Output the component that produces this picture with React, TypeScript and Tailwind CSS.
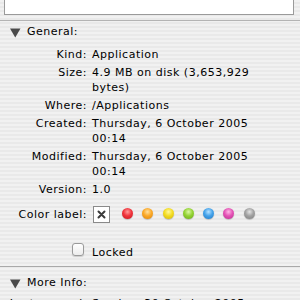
import React from "react";

const font = { fontFamily: '"DejaVu Sans", "Lucida Grande", sans-serif' };

function Tri() {
  return (
    <svg width="11" height="10" viewBox="0 0 11 10" className="mt-[4px] ml-[10px] mr-[6px] shrink-0">
      <polygon points="0,0.5 10.5,0.5 5.25,9.5" fill="#4a4a4a" />
    </svg>
  );
}

function Row({ label, lines, top }: { label: string; lines: string[]; top: string }) {
  return (
    <div className={`flex ${top}`}>
      <div className="w-[87px] text-right shrink-0 whitespace-nowrap">{label}</div>
      <div className="ml-[5px] whitespace-nowrap">
        {lines.map((l, i) => (
          <div key={i}>{l}</div>
        ))}
      </div>
    </div>
  );
}

const dots = [
  "bg-[image:radial-gradient(circle_at_50%_35%,#ff9a9a_0%,#f0343c_45%,#c5161e_100%)]",
  "bg-[image:radial-gradient(circle_at_50%_35%,#ffe0a0_0%,#fba928_45%,#d9820a_100%)]",
  "bg-[image:radial-gradient(circle_at_50%_35%,#fff8a0_0%,#f3dc22_45%,#cdb30c_100%)]",
  "bg-[image:radial-gradient(circle_at_50%_35%,#dcf7a8_0%,#94d334_45%,#6aa818_100%)]",
  "bg-[image:radial-gradient(circle_at_50%_35%,#b8e2ff_0%,#45a3ea_45%,#1f78c5_100%)]",
  "bg-[image:radial-gradient(circle_at_50%_35%,#ffb8e6_0%,#e453b6_45%,#bb2c8e_100%)]",
  "bg-[image:radial-gradient(circle_at_50%_35%,#e4e4e4_0%,#a2a2a2_45%,#7c7c7c_100%)]",
];

export default function App() {
  return (
    <div
      className="w-[300px] h-[300px] overflow-hidden text-[11px] leading-[15px] tracking-[0.5px] text-black bg-[#eeeeee] bg-[image:repeating-linear-gradient(180deg,#f1f1f1_0px,#f1f1f1_2px,#e9e9e9_2px,#e9e9e9_4px)]"
      style={font}
    >
      <div className="h-[15px] mx-[4px] w-[290px] bg-white border-x border-b border-[#9a9a9a]" />
      <div className="mt-[5px] h-px bg-[#b4b4b4]" />
      <div className="flex mt-[3px]">
        <Tri />
        <div>General:</div>
      </div>
      <Row label="Kind:" lines={["Application"]} top="mt-[8px]" />
      <Row label="Size:" lines={["4.9 MB on disk (3,653,929", "bytes)"]} top="mt-[3px]" />
      <Row label="Where:" lines={["/Applications"]} top="mt-[3px]" />
      <Row label="Created:" lines={["Thursday, 6 October 2005", "00:14"]} top="mt-[3px]" />
      <Row label="Modified:" lines={["Thursday, 6 October 2005", "00:14"]} top="mt-[3px]" />
      <Row label="Version:" lines={["1.0"]} top="mt-[3px]" />
      <div className="flex items-start mt-[9px] h-[17px]">
        <div className="w-[87px] text-right shrink-0 mt-[1px] whitespace-nowrap">Color label:</div>
        <div className="ml-[6px] w-[17px] h-[17px] bg-white border border-[#8a8a8a] flex items-center justify-center shrink-0">
          <svg width="9" height="9" viewBox="0 0 9 9">
            <path d="M1.5 1.5 L7.5 7.5 M7.5 1.5 L1.5 7.5" stroke="#3a3a3a" strokeWidth="2" strokeLinecap="round" />
          </svg>
        </div>
        <div className="ml-[12px] mt-[2px] flex gap-[9.25px]">
          {dots.map((d, i) => (
            <div key={i} className={`w-[11px] h-[11px] rounded-full ${d} shadow-[0_0.5px_1px_rgba(0,0,0,0.35)]`} />
          ))}
        </div>
      </div>
      <div className="flex items-start mt-[20px] pl-[72px] h-[15px]">
        <div className="w-[12px] h-[13px] rounded-[3px] border border-[#9a9a9a] bg-[image:linear-gradient(180deg,#ffffff,#ececec)] shadow-[0_1px_1px_rgba(0,0,0,0.15)] shrink-0" />
        <div className="ml-[8px] mt-[2px]">Locked</div>
      </div>
      <div className="mt-[8px] h-px bg-[#a9a9a9]" />
      <div className="flex mt-[8px]">
        <Tri />
        <div>More Info:</div>
      </div>
      <Row label="Last opened:" lines={["Sunday, 30 October 2005"]} top="mt-[6px]" />
    </div>
  );
}
